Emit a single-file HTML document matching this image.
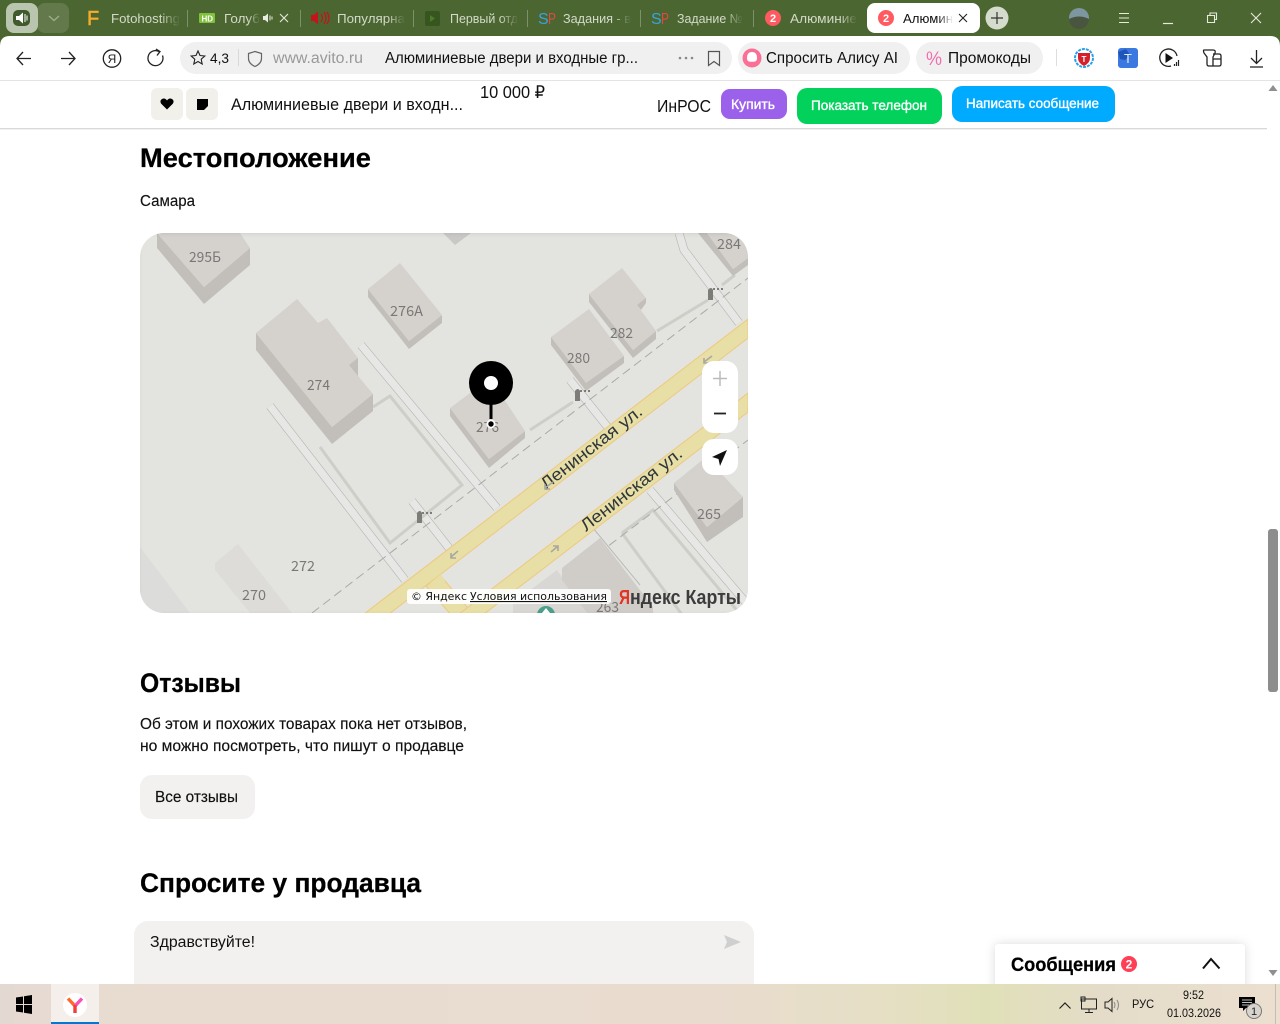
<!DOCTYPE html>
<html lang="ru"><head><meta charset="utf-8"><title>Авито</title>
<style>html,body{margin:0;padding:0;width:1280px;height:1024px;overflow:hidden;background:#fff}svg{display:block}
text{font-family:"Liberation Sans","Noto Sans CJK SC",sans-serif;fill:#111}
.b{font-weight:700;fill:#000;stroke:#000;stroke-width:.25px}.tab{font-size:13px;fill:#d3dac8}.w{fill:#fff;font-weight:400;font-size:13.5px;stroke:#fff;stroke-width:.35px}
.t{stroke:#111;stroke-width:.15px}
.m{font-family:"Noto Sans CJK SC","DejaVu Sans",sans-serif;font-size:14px;fill:#7a7876}
.ic{fill:none;stroke:#222;stroke-width:1.3}
.roof{fill:#d5d2ce}.side{fill:#c2bfba}</style></head><body>
<svg xmlns="http://www.w3.org/2000/svg" width="1280" height="1024" viewBox="0 0 1280 1024">
<defs>
<linearGradient id="f" x1="0" x2="1" y1="0" y2="0"><stop offset="0" stop-color="#4c6632" stop-opacity="0"/><stop offset="1" stop-color="#4c6632"/></linearGradient>
<linearGradient id="fw" x1="0" x2="1" y1="0" y2="0"><stop offset="0" stop-color="#fff" stop-opacity="0"/><stop offset="1" stop-color="#fff"/></linearGradient>
<linearGradient id="tb" x1="0" x2="1" y1="0" y2="0"><stop offset="0" stop-color="#e4d8d2"/><stop offset=".07" stop-color="#e8dcd1"/><stop offset=".55" stop-color="#e9dccf"/><stop offset=".68" stop-color="#e6dfc6"/><stop offset=".77" stop-color="#e0e0b8"/><stop offset=".86" stop-color="#e4dcc8"/><stop offset="1" stop-color="#ecdfd0"/></linearGradient>
<linearGradient id="sh" x1="0" x2="0" y1="0" y2="1"><stop offset="0" stop-color="#000" stop-opacity=".2"/><stop offset="1" stop-color="#000" stop-opacity="0"/></linearGradient>
<clipPath id="mc"><rect x="140" y="233" width="608" height="380" rx="24"/></clipPath>
<filter id="ps" x="-10%" y="-40%" width="120%" height="180%"><feDropShadow dx="0" dy="0" stdDeviation="5" flood-opacity=".14"/></filter>
<filter id="ms" x="-5%" y="-5%" width="110%" height="110%"><feGaussianBlur stdDeviation="2.5"/></filter>
</defs>
<rect width="1280" height="1024" fill="#fff"/>

<!-- map -->
<g clip-path="url(#mc)">
<rect x="140" y="233" width="608" height="380" fill="#e3e3df"/>
<path d="M140 547L190 613H140Z" fill="#dcdcda"/>
<g fill="none" stroke-linecap="butt">
<g stroke="#b4b4b2" stroke-width="8.600"><path d="M361 345L497 508M270 406L405 580M570 380L610 430M412 501L449 548M679 233L684 250L739 323M650 490L748 605"/></g>
<g stroke="#e7e7e6" stroke-width="7.400"><path d="M361 345L497 508M270 406L405 580M570 380L610 430M412 501L449 548M679 233L684 250L739 323M650 490L748 605"/></g>
<path d="M593 528L640 585" stroke="#b9b9b7" stroke-width="1"/>
<path d="M373 407L390 396L462 485L390 543L320 447M530 430L573 402M657 331L708 300M722 285L735 275M622 533L653 510L745 620M622 533L686 620" stroke="#cecec9" stroke-width="3"/>
<path d="M312 613L748 278M520 613L748 440" stroke="#a9a9a9" stroke-width="1" stroke-dasharray="9 5"/>
</g>
<g fill="#e8dfa6" stroke="#edc97e" stroke-width="1">
<path d="M426 586L440 575L472 613L452 616Z"/>
<path d="M748 319V338L389 614H364Z"/>
<path d="M748 393V412L484 614H459Z"/>
</g>
<path d="M430 583L441 574L445 581L434 590Z" fill="#e8dfa6"/>
<path d="M157 233L204 287L250 248V265L204 304L157 248Z" class="side"/><path d="M157 233H240L250 248L204 287Z" class="roof"/>
<path d="M443 233L455 245L471 233Z" fill="#c9c8c7"/>
<path d="M368 289L409 341L442 315V323L409 349L368 297Z" class="side"/><path d="M400 263L442 315L409 341L368 289Z" class="roof"/>
<path d="M256 333L332 427L373 394V411L332 444L256 350Z" class="side"/>
<path d="M297 299L318 323L327 318L358 358V376L373 394L332 427L256 333Z" class="roof"/><path d="M349 365L358 358V376Z" class="side"/>
<path d="M551 337L586 381L624 356V363L586 391L551 345Z" class="side"/><path d="M589 309L624 356L586 383L551 337Z" class="roof"/>
<path d="M589 294L633 350L656 331V339L633 358L589 302Z" class="side"/><path d="M622 268L646 298V302L637 305L656 331L633 350L589 294Z" class="roof"/><path d="M637 305L646 298V303L641 310Z" class="side"/>
<path d="M698 233L733 276L748 265V258L733 269L707 233Z" class="side"/><path d="M707 233L733 269L748 258V233Z" class="roof"/>
<path d="M450 408L489 459L525 431V438L489 468L450 416Z" class="side"/><path d="M490 378L525 431L489 459L450 408Z" class="roof"/>
<path d="M674 483L707 527L743 497V517L707 542L674 490Z" class="side"/><path d="M706 457L743 497L707 527L674 483Z" class="roof"/>
<path d="M238 544L215 563V570L250 613H292Z" fill="#dedcd8"/>
<path d="M513 603L557 570L587 613H513Z" fill="#d9d7d3"/><path d="M562 568L600 538L653 607V613H587L562 580Z" fill="#d0cdc9"/>
<circle cx="546" cy="615" r="9" fill="#4ba08a"/><path d="M546 608l4 5h-8Z" fill="#fff"/>
<text class="m" x="189" y="262" textLength="32" lengthAdjust="spacingAndGlyphs">295Б</text>
<text class="m" x="390" y="316" textLength="33" lengthAdjust="spacingAndGlyphs">276А</text>
<text class="m" x="307" y="390" textLength="23" lengthAdjust="spacingAndGlyphs">274</text>
<text class="m" x="610" y="338" textLength="23" lengthAdjust="spacingAndGlyphs">282</text>
<text class="m" x="567" y="363" textLength="23" lengthAdjust="spacingAndGlyphs">280</text>
<text class="m" x="717" y="249" textLength="24" lengthAdjust="spacingAndGlyphs">284</text>
<text class="m" x="476" y="432" textLength="23" lengthAdjust="spacingAndGlyphs">276</text>
<text class="m" x="697" y="519" textLength="24" lengthAdjust="spacingAndGlyphs">265</text>
<text class="m" x="291" y="571" textLength="24" lengthAdjust="spacingAndGlyphs">272</text>
<text class="m" x="242" y="600" textLength="24" lengthAdjust="spacingAndGlyphs">270</text>
<text class="m" x="596" y="612" textLength="23" lengthAdjust="spacingAndGlyphs">263</text>
<text transform="translate(546,490) rotate(-38)" font-size="17" style="fill:#2f363b" textLength="124" lengthAdjust="spacingAndGlyphs">Ленинская ул.</text>
<text transform="translate(586,532) rotate(-38)" font-size="17" style="fill:#2f363b" textLength="124" lengthAdjust="spacingAndGlyphs">Ленинская ул.</text>
<g stroke="#a9a7a0" stroke-width="1.600" fill="none"><path d="M545 488l8-6M545 484v5h5M451 557l7-6M451 553v5h5M704 362l8-6M704 358v5h5M558 546l-7 6M558 551v-5h-5"/></g>
<g fill="#7e7c78"><path d="M708 300v-10q3-4 5 0v10ZM575 401v-10q3-4 5 0v10ZM417 523v-10q3-4 5 0v10Z"/></g>
<g stroke="#7e7c78" stroke-width="2" stroke-dasharray="2 2"><path d="M713 289h11M580 391h11M422 513h11"/></g>
<rect x="135" y="230" width="620" height="388" fill="none" stroke="#000" stroke-opacity=".13" stroke-width="6" filter="url(#ms)"/>
<rect x="407" y="589" width="204" height="15" rx="3" fill="#fff" fill-opacity=".9"/>
<text x="411" y="600" font-size="11" style="fill:#111;font-family:'DejaVu Sans',sans-serif" textLength="56" lengthAdjust="spacingAndGlyphs">© Яндекс</text>
<text x="470" y="600" font-size="11" text-decoration="underline" style="fill:#111;font-family:'DejaVu Sans',sans-serif" textLength="137" lengthAdjust="spacingAndGlyphs">Условия использования</text>
<text x="619" y="604" font-size="20" font-weight="700" style="fill:#e63222" textLength="11" lengthAdjust="spacingAndGlyphs">Я</text>
<text x="630" y="604" font-size="20" font-weight="700" style="fill:#3c3c3c" textLength="111" lengthAdjust="spacingAndGlyphs">ндекс Карты</text>
</g>
<rect x="489.500" y="400" width="3" height="19" fill="#000"/>
<circle cx="491" cy="383" r="22" fill="#000"/><circle cx="491" cy="383" r="7" fill="#fff"/>
<circle cx="491" cy="424" r="4.500" fill="#fff"/><circle cx="491" cy="424" r="2.700" fill="#000"/>
<rect x="702" y="361" width="36" height="72" rx="12" fill="#fff"/>
<path d="M720 371v15M713 378.500h14" stroke="#bbb" stroke-width="1.500" fill="none"/>
<path d="M714 413.500h12" stroke="#222" stroke-width="1.800"/>
<rect x="702" y="439" width="36" height="36" rx="12" fill="#fff"/>
<path d="M727 450L712 457L718.500 459L720 466Z" fill="#111"/>

<text class="b" x="140" y="167" font-size="27" textLength="231" lengthAdjust="spacingAndGlyphs">Местоположение</text>
<text class="t" x="140" y="206" font-size="15.500" textLength="55" lengthAdjust="spacingAndGlyphs">Самара</text>
<text class="b" x="140" y="692" font-size="27" textLength="101" lengthAdjust="spacingAndGlyphs">Отзывы</text>
<text class="t" x="140" y="729" font-size="15.500" textLength="327" lengthAdjust="spacingAndGlyphs">Об этом и похожих товарах пока нет отзывов,</text>
<text class="t" x="140" y="751" font-size="15.500" textLength="324" lengthAdjust="spacingAndGlyphs">но можно посмотреть, что пишут о продавце</text>
<rect x="140" y="775" width="115" height="44" rx="12" fill="#f2f1ef"/>
<text class="t" x="155" y="802" font-size="15.500" textLength="83" lengthAdjust="spacingAndGlyphs">Все отзывы</text>
<text class="b" x="140" y="892" font-size="27" textLength="281" lengthAdjust="spacingAndGlyphs">Спросите у продавца</text>
<rect x="134" y="921" width="620" height="90" rx="14" fill="#f2f1ef"/>
<text x="150" y="947" font-size="15.500" textLength="105" lengthAdjust="spacingAndGlyphs">Здравствуйте!</text>
<path d="M724 935L741 942L724 949L727 942Z" fill="#cfcfcf"/>

<rect x="1267" y="81" width="13" height="903" fill="#fff"/>
<path d="M1273 85l4.500 6h-9Z" fill="#8f8f8f"/>
<rect x="1268" y="529" width="10" height="163" rx="3" fill="#8d8d8d"/>
<path d="M1273 976l4.500-6h-9Z" fill="#8f8f8f"/>

<rect x="995" y="944" width="250" height="60" rx="4" fill="#fff" filter="url(#ps)"/>
<text class="b" x="1011" y="971" font-size="19" textLength="105" lengthAdjust="spacingAndGlyphs">Сообщения</text>
<circle cx="1129" cy="964" r="8" fill="#ff3f55"/><text x="1129" y="968.500" font-size="12" font-weight="700" text-anchor="middle" style="fill:#fff">2</text>
<path d="M1203 968.500L1211 959L1219.500 968.500" fill="none" stroke="#111" stroke-width="2"/>

<rect y="81" width="1267" height="47" fill="#fff"/>
<rect y="128" width="1267" height="2" fill="url(#sh)"/>
<rect x="151" y="88" width="32" height="32" rx="6" fill="#f2f0eb"/>
<rect x="186" y="88" width="32" height="32" rx="6" fill="#f2f0eb"/>
<path d="M167 109.500L161 103.500Q159.500 100.500 162 99Q165 97.500 167 100.500Q169 97.500 172 99Q174.500 100.500 173 103.500Z" fill="#000"/>
<path d="M197 99h11v7l-4 4h-7Z" fill="#000"/>
<text x="231" y="110" font-size="16.500" textLength="232" lengthAdjust="spacingAndGlyphs">Алюминиевые двери и входн...</text>
<text x="480" y="98" font-size="17.500" textLength="65" lengthAdjust="spacingAndGlyphs">10 000 ₽</text>
<text x="657" y="112" font-size="17.500" textLength="54" lengthAdjust="spacingAndGlyphs">ИнРОС</text>
<rect x="721" y="89" width="66" height="30" rx="9" fill="#9b61ea"/>
<text class="w" x="731" y="109" textLength="44" lengthAdjust="spacingAndGlyphs">Купить</text>
<rect x="797" y="88" width="145" height="36" rx="10" fill="#02d15c"/>
<text class="w" x="811" y="110" textLength="116" lengthAdjust="spacingAndGlyphs">Показать телефон</text>
<rect x="952" y="86" width="163" height="36" rx="10" fill="#00aaff"/>
<text class="w" x="966" y="108" textLength="133" lengthAdjust="spacingAndGlyphs">Написать сообщение</text>

<rect width="1280" height="46" fill="#4c6632"/>
<rect x="37" y="3" width="32" height="30" rx="8" fill="#fff" fill-opacity=".13"/>
<rect x="6" y="3" width="32" height="30" rx="8" fill="#bac5af"/>
<rect x="13" y="10" width="17" height="16" rx="5" fill="#3f5a2c"/>
<path d="M16 16h3l4-3.500v11L19 20h-3Z" fill="#fff"/><path d="M25 14v8M27 15.500v5" stroke="#fff" stroke-width="1"/>
<path d="M49 16l5 4.500 5-4.500" fill="none" stroke="#9eae8e" stroke-width="1.300"/>
<text x="87" y="25" font-size="20" style="fill:#f7ad2b;stroke:#f7ad2b;stroke-width:.5px">F</text>
<text class="tab" x="111" y="23" textLength="69" lengthAdjust="spacingAndGlyphs">Fotohosting</text><rect x="160" y="8" width="20" height="20" fill="url(#f)"/>
<rect x="199" y="13" width="16" height="10" rx="1" fill="#7fc13b"/><text x="201.500" y="21.500" font-size="8" font-weight="700" style="fill:#fff">HD</text>
<text class="tab" x="224" y="23" textLength="36" lengthAdjust="spacingAndGlyphs">Голуб</text><rect x="248" y="8" width="12" height="20" fill="url(#f)"/>
<path d="M263 16h2l3-2.500v9L265 20h-2Z" fill="#e8ece0"/><path d="M270 15.500v5M272 16.500v3" stroke="#e8ece0"/>
<path d="M280 14l8 8M288 14l-8 8" stroke="#e6eadd" stroke-width="1.100"/>
<path d="M311 15h3l4-3.500v13L314 21h-3Z" fill="#c4131a"/><path d="M321 14q3 4 0 8M324 12q4 6 0 12M327 12q4 6 0 12" fill="none" stroke="#c4131a" stroke-width="1.200"/>
<text class="tab" x="337" y="23" textLength="68" lengthAdjust="spacingAndGlyphs">Популярна</text><rect x="387" y="8" width="18" height="20" fill="url(#f)"/>
<rect x="425" y="11" width="15" height="15" rx="2" fill="#37561f"/><path d="M430 15l5 3.500-5 3.500Z" fill="#4d7a2b"/>
<text class="tab" x="450" y="23" textLength="68" lengthAdjust="spacingAndGlyphs">Первый отд</text><rect x="500" y="8" width="18" height="20" fill="url(#f)"/>
<text x="538" y="24" font-size="16" style="fill:#3aa3dc">S</text><text x="548" y="24" font-size="16" style="fill:#e2483f" textLength="8" lengthAdjust="spacingAndGlyphs">P</text>
<text class="tab" x="563" y="23" textLength="68" lengthAdjust="spacingAndGlyphs">Задания - в</text><rect x="613" y="8" width="18" height="20" fill="url(#f)"/>
<text x="651" y="24" font-size="16" style="fill:#3aa3dc">S</text><text x="661" y="24" font-size="16" style="fill:#e2483f" textLength="8" lengthAdjust="spacingAndGlyphs">P</text>
<text class="tab" x="677" y="23" textLength="66" lengthAdjust="spacingAndGlyphs">Задание №</text><rect x="725" y="8" width="18" height="20" fill="url(#f)"/>
<circle cx="773" cy="18" r="8" fill="#ff5a5f"/><text x="773" y="22" font-size="11" font-weight="700" text-anchor="middle" style="fill:#fff">2</text>
<text class="tab" x="790" y="23" textLength="67" lengthAdjust="spacingAndGlyphs">Алюминие</text><rect x="839" y="8" width="18" height="20" fill="url(#f)"/>
<g stroke="#fff" stroke-opacity=".28"><path d="M187.500 10v17M300.500 10v17M413.500 10v17M527.500 10v17M640.500 10v17M753.500 10v17"/></g>
<rect x="867" y="3" width="113" height="30" rx="8" fill="#fff"/>
<circle cx="886" cy="18" r="8" fill="#ff5a5f"/><text x="886" y="22" font-size="11" font-weight="700" text-anchor="middle" style="fill:#fff">2</text>
<text x="903" y="23" font-size="13" textLength="50" lengthAdjust="spacingAndGlyphs">Алюмин</text><rect x="938" y="8" width="15" height="20" fill="url(#fw)"/>
<path d="M959 14l8 8M967 14l-8 8" stroke="#222" stroke-width="1.100"/>
<circle cx="997" cy="18" r="11.500" fill="#d6dccd"/><path d="M997 12v12M991 18h12" stroke="#333" stroke-width="1.200"/>
<circle cx="1079" cy="18" r="10" fill="#7d96a0"/><path d="M1069 19q10-5 20 0a10 10 0 0 1-20 0Z" fill="#49553f"/>
<path d="M1119 13.500h10M1119 18h10M1119 22.500h10" stroke="#e6eadd" stroke-width="1.100"/>
<path d="M1163 23.500h10" stroke="#e6eadd" stroke-width="1.200"/>
<path d="M1207.500 15.500h7v7h-7ZM1210 15.500v-2.500h6.500v6.500h-2" fill="none" stroke="#e6eadd" stroke-width="1.100"/>
<path d="M1251 13l10 10M1261 13l-10 10" stroke="#e6eadd" stroke-width="1.100"/>

<path d="M0 81V46Q0 36 10 36H1270Q1280 36 1280 46V81Z" fill="#fff"/>
<rect y="80" width="1280" height="1" fill="#e4e4e4"/>
<path d="M31 58.500H17M23 52l-6 6.500 6 6.500M61 58.500H75M69 52l6 6.500-6 6.500" class="ic"/>
<circle cx="112" cy="58.500" r="8.700" class="ic"/><text x="112" y="63" font-size="12" text-anchor="middle" style="fill:#222">Я</text>
<path d="M159 51.500a7.500 7.500 0 1 0 3.500 4M156 49l4 2.500-3 4" class="ic"/>
<rect x="180" y="42" width="552" height="32" rx="16" fill="#f0f0f0"/>
<path d="M198 51l2 4.500 4.800.5-3.600 3.200 1 4.800-4.200-2.500-4.200 2.500 1-4.800-3.600-3.200 4.800-.5Z" class="ic" style="stroke-width:1.100"/>
<text x="210" y="63" font-size="14" textLength="19" lengthAdjust="spacingAndGlyphs">4,3</text>
<path d="M238.500 49v17" stroke="#d8d8d8"/>
<path d="M255 51.500l6.500 2v5q0 5-6.500 8-6.500-3-6.500-8v-5Z" fill="none" stroke="#666" stroke-width="1.200"/>
<text x="273" y="63" font-size="15.500" style="fill:#999" textLength="90" lengthAdjust="spacingAndGlyphs">www.avito.ru</text>
<text x="385" y="63" font-size="15.500" textLength="253" lengthAdjust="spacingAndGlyphs">Алюминиевые двери и входные гр...</text>
<g fill="#888"><circle cx="680" cy="58" r="1.300"/><circle cx="686" cy="58" r="1.300"/><circle cx="692" cy="58" r="1.300"/></g>
<path d="M708.500 51.500h11v14l-5.500-4-5.500 4Z" fill="none" stroke="#555" stroke-width="1.200"/>
<rect x="738" y="42" width="172" height="32" rx="16" fill="#f0f0f0"/>
<circle cx="752" cy="58" r="9.500" fill="#fa6f96"/><path d="M752 52q5 0 5 6 0 3-2 3.500-1.500.3-3 .3t-3-.3q-2-.5-2-3.500 0-6 5-6Z" fill="#fff"/>
<text x="766" y="63" font-size="16" textLength="132" lengthAdjust="spacingAndGlyphs">Спросить Алису AI</text>
<rect x="916" y="42" width="127" height="32" rx="16" fill="#f0f0f0"/>
<text x="926" y="65" font-size="19" style="fill:#f06fb0" textLength="16" lengthAdjust="spacingAndGlyphs">%</text>
<text x="948" y="63" font-size="16" textLength="83" lengthAdjust="spacingAndGlyphs">Промокоды</text>
<path d="M1056.500 49v17" stroke="#ddd"/>
<circle cx="1084" cy="58" r="9" fill="none" stroke="#2a9fe8" stroke-width="2" stroke-dasharray="3 1"/>
<path d="M1078 53h12v5q0 5-6 8-6-3-6-8Z" fill="#d5202b"/><text x="1084" y="62" font-size="8" font-weight="700" text-anchor="middle" style="fill:#fff">T</text>
<rect x="1118" y="48" width="20" height="20" rx="3" fill="#3b78e0"/><path d="M1118 52l8-3 4 6-5 5-5-1Z" fill="#1f55b8"/><text x="1128" y="63" font-size="13" text-anchor="middle" style="fill:#dfe9ff">T</text>
<path d="M1177 56a8.700 8.700 0 1 0-6 10" class="ic"/><path d="M1165.500 53l7.500 5-7.500 5Z" fill="#111"/>
<path d="M1174.500 66v-2M1176.500 66v-4M1178.500 66v-6" stroke="#222" stroke-width="1.200"/>
<path d="M1204 50h9q3 0 2 3l-2 4v9h-4q-2 0-2-2v-7l-3-4q-1-3 0-3ZM1213 54h6q2 0 2 2v8q0 2-2 2h-6M1213 59h8" class="ic"/>
<path d="M1256.500 50v13M1251 58l5.500 5.500 5.500-5.500M1250 67h13" class="ic"/>

<rect y="984" width="1280" height="40" fill="url(#tb)"/>
<path d="M16 997.500l7-1v7.500h-7ZM24 996.300l8-1.300v9h-8ZM16 1005h7v7.500l-7-1ZM24 1005h8v9l-8-1.300Z" fill="#000"/>
<rect x="51" y="984" width="48" height="40" fill="#f4efeb"/><rect x="51" y="1022" width="48" height="2" fill="#0078d4"/>
<circle cx="75" cy="1005" r="12" fill="#fff"/>
<path d="M68 998.500L75 1006" stroke="#ff6a2b" stroke-width="3.400" fill="none"/><path d="M82 998.500L75 1006" stroke="#f750b8" stroke-width="3.400" fill="none"/><path d="M75 1005V1013" stroke="#f33c3c" stroke-width="3.400" fill="none"/>
<path d="M1059.500 1008.500l5.500-5.500 5.500 5.500" fill="none" stroke="#222" stroke-width="1.200"/>
<path d="M1081.500 999h15v10h-15ZM1089 1009v3.500M1085 1012.500h8M1081 997h4v4h-4Z" fill="none" stroke="#222" stroke-width="1"/>
<path d="M1105 1002h3l4-3.500v13l-4-3.500h-3Z" fill="none" stroke="#222" stroke-width="1"/><path d="M1114 1002q2 3 0 6M1117 1000q3 5 0 10" fill="none" stroke="#888"/>
<text x="1132" y="1008" font-size="12" textLength="22" lengthAdjust="spacingAndGlyphs">РУС</text>
<text x="1183" y="999" font-size="12" textLength="21" lengthAdjust="spacingAndGlyphs">9:52</text>
<text x="1167" y="1017" font-size="12" textLength="54" lengthAdjust="spacingAndGlyphs">01.03.2026</text>
<path d="M1239 997h16v11h-9l-3 3v-3h-4Z" fill="#000"/><path d="M1242 1000h10M1242 1002.500h10M1242 1005h7" stroke="#fff" stroke-width=".8"/>
<circle cx="1254" cy="1011" r="7.500" fill="#d8d4cd" stroke="#777"/><text x="1254" y="1015" font-size="11" text-anchor="middle" style="fill:#222">1</text>
<path d="M1275.500 984v40" stroke="#c4bfb6"/>
</svg>
</body></html>
